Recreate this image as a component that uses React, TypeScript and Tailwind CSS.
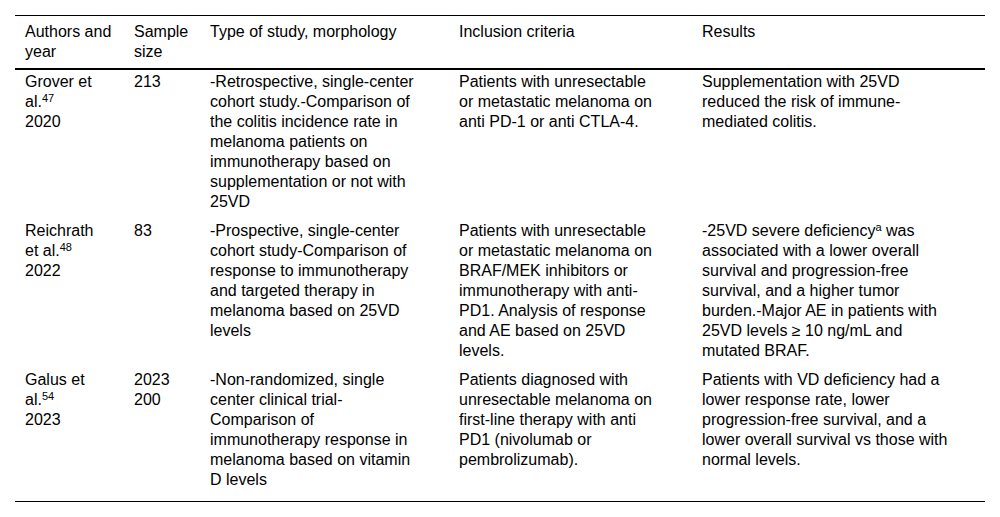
import React from "react";

const cellBase = "pl-[10px] pt-[2px] pb-[7px]";

function Sup({ children }: { children: React.ReactNode }) {
  return <sup className="text-[11px]">{children}</sup>;
}

export default function App() {
  return (
    <div
      className="w-[1000px] h-[517px] bg-white text-black text-[16px] leading-[20px]"
      style={{ fontFamily: '"Liberation Sans", Arial, sans-serif' }}
    >
      <div className="ml-[15px] pt-[15px] w-[970px]">
        <div className="border-t border-black">
          {/* Header */}
          <div className="grid grid-cols-[109px_76px_249px_243px_293px] border-b-2 border-black">
            <div className="pl-[10px] pr-[10px] pt-[6px] pb-[6px]">Authors and year</div>
            <div className="pl-[10px] pr-[6px] pt-[6px] pb-[6px]">Sample size</div>
            <div className="pl-[10px] pr-[27px] pt-[6px] pb-[6px]">Type of study, morphology</div>
            <div className="pl-[10px] pr-[34px] pt-[6px] pb-[6px]">Inclusion criteria</div>
            <div className="pl-[10px] pr-[31px] pt-[6px] pb-[6px]">Results</div>
          </div>

          {/* Row 1 */}
          <div className="grid grid-cols-[109px_76px_249px_243px_293px]">
            <div className={`${cellBase} pr-[10px]`}>
              Grover et
              <br />
              al.<Sup>47</Sup>
              <br />
              2020
            </div>
            <div className={`${cellBase} pr-[6px]`}>213</div>
            <div className={`${cellBase} pr-[27px]`}>
              -Retrospective, single-center cohort study.-Comparison of the colitis incidence rate in melanoma patients on immunotherapy based on supplementation or not with 25VD
            </div>
            <div className={`${cellBase} pr-[34px]`}>
              Patients with unresectable or metastatic melanoma on anti PD-1 or anti CTLA-4.
            </div>
            <div className={`${cellBase} pr-[31px]`}>
              Supplementation with 25VD reduced the risk of immune-mediated colitis.
            </div>
          </div>

          {/* Row 2 */}
          <div className="grid grid-cols-[109px_76px_249px_243px_293px]">
            <div className={`${cellBase} pr-[10px]`}>
              Reichrath
              <br />
              et al.<Sup>48</Sup>
              <br />
              2022
            </div>
            <div className={`${cellBase} pr-[6px]`}>83</div>
            <div className={`${cellBase} pr-[27px]`}>
              -Prospective, single-center cohort study-Comparison of response to immunotherapy and targeted therapy in melanoma based on 25VD levels
            </div>
            <div className={`${cellBase} pr-[34px]`}>
              Patients with unresectable or metastatic melanoma on BRAF/MEK inhibitors or immunotherapy with anti-PD1. Analysis of response and AE based on 25VD levels.
            </div>
            <div className={`${cellBase} pr-[31px]`}>
              -25VD severe deficiency<Sup>a</Sup> was associated with a lower overall survival and progression-free survival, and a higher tumor burden.-Major AE in patients with 25VD levels ≥ 10 ng/mL and mutated BRAF.
            </div>
          </div>

          {/* Row 3 */}
          <div className="grid grid-cols-[109px_76px_249px_243px_293px] border-b border-black">
            <div className="pl-[10px] pr-[10px] pt-[2px] pb-[11px]">
              Galus et
              <br />
              al.<Sup>54</Sup>
              <br />
              2023
            </div>
            <div className="pl-[10px] pr-[6px] pt-[2px] pb-[11px]">2023 200</div>
            <div className="pl-[10px] pr-[27px] pt-[2px] pb-[11px]">
              -Non-randomized, single center clinical trial-Comparison of immunotherapy response in melanoma based on vitamin D levels
            </div>
            <div className="pl-[10px] pr-[34px] pt-[2px] pb-[11px]">
              Patients diagnosed with unresectable melanoma on first-line therapy with anti PD1 (nivolumab or pembrolizumab).
            </div>
            <div className="pl-[10px] pr-[31px] pt-[2px] pb-[11px]">
              Patients with VD deficiency had a lower response rate, lower progression-free survival, and a lower overall survival vs those with normal levels.
            </div>
          </div>
        </div>
      </div>
    </div>
  );
}
